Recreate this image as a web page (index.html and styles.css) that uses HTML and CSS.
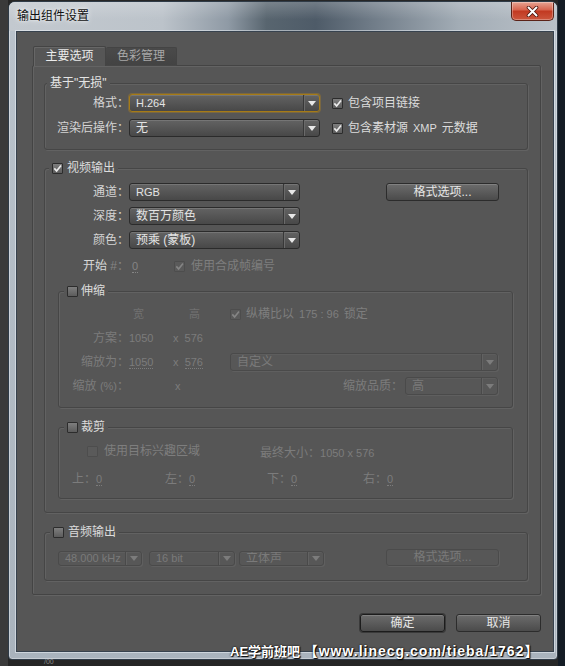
FILE: index.html
```html
<!DOCTYPE html>
<html lang="zh-CN">
<head>
<meta charset="utf-8">
<title>输出组件设置</title>
<link rel="stylesheet" href="styles.css">
</head>
<body>
<div class="desk">
  <div class="window">
    <div class="titlebar">
      <span class="title">输出组件设置</span>
      <div class="close">
        <svg width="13" height="11" viewBox="0 0 13 11"><path d="M2.5 1.5 L10.5 9.5 M10.5 1.5 L2.5 9.5" stroke="#4a140c" stroke-width="3.6" stroke-linecap="round"/><path d="M2.5 1.5 L10.5 9.5 M10.5 1.5 L2.5 9.5" stroke="#ffffff" stroke-width="2" stroke-linecap="round"/></svg>
      </div>
    </div>
    <div class="client">
      <div class="tabs">
        <div class="tab active">主要选项</div>
        <div class="tab">色彩管理</div>
      </div>
      <div class="panel">
        <div class="group g-base">
          <div class="legend">基于"无损"</div>
          <div class="grid-base">
            <div class="lbl">格式：</div>
            <div class="sel focus"><span class="v lat">H.264</span><span class="a"></span></div>
            <div class="chk"><span class="cb"><svg viewBox="0 0 9 9" width="9" height="9"><path d="M1.3 4.4 3.6 6.9 8 1.4" fill="none" stroke="currentColor" stroke-width="1.6"/></svg></span>包含项目链接</div>
            <div class="lbl">渲染后操作：</div>
            <div class="sel"><span class="v">无</span><span class="a"></span></div>
            <div class="chk"><span class="cb"><svg viewBox="0 0 9 9" width="9" height="9"><path d="M1.3 4.4 3.6 6.9 8 1.4" fill="none" stroke="currentColor" stroke-width="1.6"/></svg></span>包含素材源 <span class="lat xmp">XMP</span> 元数据</div>
          </div>
        </div>

        <div class="group g-video">
          <div class="legend chk"><span class="cb"><svg viewBox="0 0 9 9" width="9" height="9"><path d="M1.3 4.4 3.6 6.9 8 1.4" fill="none" stroke="currentColor" stroke-width="1.6"/></svg></span>视频输出</div>
          <div class="grid-video">
            <div class="lbl">通道：</div>
            <div class="sel"><span class="v lat">RGB</span><span class="a"></span></div>
            <div class="btn fmt">格式选项...</div>
            <div class="lbl">深度：</div>
            <div class="sel"><span class="v">数百万颜色</span><span class="a"></span></div>
            <div></div>
            <div class="lbl">颜色：</div>
            <div class="sel"><span class="v">预乘 (蒙板)</span><span class="a"></span></div>
            <div></div>
          </div>
          <div class="start-row">
            <div class="lbl"><span class="hi">开始</span> <span class="dim">#：</span></div>
            <div class="num"><span class="ul lat">0</span></div>
            <div class="chk dis"><span class="cb"><svg viewBox="0 0 9 9" width="9" height="9"><path d="M1.3 4.4 3.6 6.9 8 1.4" fill="none" stroke="currentColor" stroke-width="1.6"/></svg></span>使用合成帧编号</div>
          </div>

          <div class="group g-stretch">
            <div class="legend chk"><span class="cb"></span>伸缩</div>
            <div class="grid-stretch dis">
              <div></div>
              <div class="hdr w">宽</div>
              <div class="hdr h">高</div>
              <div class="chk dis"><span class="cb"><svg viewBox="0 0 9 9" width="9" height="9"><path d="M1.3 4.4 3.6 6.9 8 1.4" fill="none" stroke="currentColor" stroke-width="1.6"/></svg></span>纵横比以 <span class="lat">175 : 96</span> 锁定</div>

              <div class="lbl">方案：</div>
              <div class="lat">1050</div>
              <div class="lat">x&nbsp; 576</div>
              <div></div>

              <div class="lbl">缩放为：</div>
              <div class="lat"><span class="ul">1050</span></div>
              <div class="lat">x&nbsp; <span class="ul">576</span></div>
              <div class="sel dis"><span class="v">自定义</span><span class="a"></span></div>

              <div class="lbl">缩放 <span class="lat">(%)</span>：</div>
              <div></div>
              <div class="lat xcol">x</div>
              <div class="qual">缩放品质：<div class="sel dis q"><span class="v">高</span><span class="a"></span></div></div>
            </div>
          </div>

          <div class="group g-crop">
            <div class="legend chk"><span class="cb"></span>裁剪</div>
            <div class="crop-r1 dis">
              <div class="chk dis roi"><span class="cb"></span>使用目标兴趣区域</div>
              <div>最终大小：<span class="lat">1050 x 576</span></div>
            </div>
            <div class="crop-r2 dis">
              <div class="c1">上：<span class="ul lat">0</span></div>
              <div class="c2">左：<span class="ul lat">0</span></div>
              <div class="c3">下：<span class="ul lat">0</span></div>
              <div>右：<span class="ul lat">0</span></div>
            </div>
          </div>
        </div>

        <div class="group g-audio">
          <div class="legend chk"><span class="cb"></span>音频输出</div>
          <div class="audio-row">
            <div class="sel dis sm w1"><span class="v lat">48.000 kHz</span><span class="a"></span></div>
            <div class="sel dis sm w2"><span class="v lat">16 bit</span><span class="a"></span></div>
            <div class="sel dis sm w3"><span class="v">立体声</span><span class="a"></span></div>
            <div class="btn dis afmt">格式选项...</div>
          </div>
        </div>
      </div>

      <div class="actions">
        <div class="btn act default">确定</div>
        <div class="btn act">取消</div>
      </div>
    </div>
  </div>
  <div class="wm">AE学前班吧 <span class="url">【www.linecg.com/tieba/1762】</span></div>
  <div class="under">/00</div>
</div>
</body>
</html>
```

FILE: styles.css
```css
* { box-sizing: border-box; }
html, body { margin: 0; padding: 0; }
body {
  width: 565px;
  height: 666px;
  overflow: hidden;
  background: #232323;
  font-family: "Liberation Sans", "Noto Sans CJK SC", sans-serif;
  font-size: 12px;
  color: #d6d6d6;
}
.desk {
  position: relative;
  width: 565px;
  height: 666px;
  padding-top: 1px;
  background: linear-gradient(90deg, #3a3a3a 0, #3a3a3a 8px, #262626 8px, #262626 558px, #141c25 558px);
}
.window {
  margin-left: 8px;
  width: 550px;
  height: 659px;
  border: 1px solid #2f3b47;
  border-radius: 7px 7px 4px 4px;
  background: linear-gradient(#bac3cc, #a9b3bd);
  box-shadow: inset 0 0 0 1px rgba(255,255,255,.35);
  display: flex;
  flex-direction: column;
  overflow: hidden;
}
.titlebar {
  flex: none;
  height: 29px;
  display: flex;
  align-items: flex-start;
  padding-left: 8px;
  background:
    linear-gradient(180deg, rgba(255,255,255,.2), rgba(255,255,255,0) 60%),
    linear-gradient(90deg, #c3c9cf 0%, #bcc3ca 28%, #8f9aa5 40%, #58656f 47%, #4e5b68 56%, #6f7b87 66%, #a2acb5 82%, #bac1c8 100%);
}
.title {
  line-height: 28px;
  color: #101010;
  text-shadow: 0 0 6px rgba(255,255,255,.9), 0 0 3px rgba(255,255,255,.7);
}
.close {
  margin-left: auto;
  margin-right: 3px;
  width: 43px;
  height: 19px;
  border: 1px solid #5b2217;
  border-top: none;
  border-radius: 0 0 5px 5px;
  background: linear-gradient(#e7a392 0%, #d86650 42%, #c23a22 52%, #cc563d 100%);
  box-shadow: inset 0 0 0 1px rgba(255,255,255,.3);
  display: flex;
  align-items: center;
  justify-content: center;
}
.client {
  flex: none;
  margin: 0 3px 0 7px;
  height: 621px;
  background: #565656;
  border: 1px solid #37424e;
  box-shadow: 0 0 0 1px rgba(235,240,245,.55);
  padding: 14px 12px 0 15px;
}

/* tabs */
.tabs {
  display: flex;
  height: 20px;
  margin-left: 1px;
  margin-bottom: -1px;
  position: relative;
  z-index: 1;
}
.tab {
  height: 20px;
  line-height: 18px;
  text-align: center;
  border: 1px solid #444;
  border-bottom: none;
  border-radius: 2px 2px 0 0;
}
.tab.active {
  width: 73px;
  background: #565656;
  color: #ebebeb;
  box-shadow: inset 1px 1px 0 #676767;
}
.tab:not(.active) {
  width: 71px;
  height: 19px;
  margin-top: 1px;
  line-height: 17px;
  border-left: none;
  border-bottom: 1px solid #464646;
  background: linear-gradient(#4a4a4a, #434343);
  color: #a8a8a8;
}
.panel {
  height: 530px;
  border: 1px solid #444;
  border-radius: 2px;
  box-shadow: inset 1px 1px 0 #636363, 1px 1px 0 #636363;
  padding: 17px 12px 0 11px;
}

/* groups */
.group {
  position: relative;
  border: 1px solid #464646;
  border-radius: 3px;
  box-shadow: inset 1px 1px 0 #626262, 1px 1px 0 #626262;
}
.legend {
  position: absolute;
  top: -10px;
  left: 4px;
  height: 18px;
  line-height: 18px;
  padding: 0 3px;
  background: #565656;
  color: #e4e4e4;
  white-space: nowrap;
}
.legend.chk { gap: 4px; }
.g-base { height: 67px; padding-top: 10px; }
.g-base .legend { left: 2px; }
.g-video { height: 345px; margin-top: 18px; padding-top: 14px; }
.g-stretch { height: 117px; margin: 18px 14px 0 13px; padding-top: 13px; }
.g-stretch .legend, .g-crop .legend { left: 5px; gap: 3px; }
.g-crop { height: 72px; margin: 19px 14px 0 13px; padding-top: 14px; }
.g-audio { height: 49px; margin-top: 19px; padding-top: 16px; }
.g-audio .legend { left: 5px; }

.lbl { text-align: right; white-space: nowrap; line-height: 18px; color: #d4d4d4; }
.lat { font-size: 11px; }
.xmp { font-size: 11px; }

/* checkbox */
.chk {
  display: flex;
  align-items: center;
  gap: 5px;
  white-space: nowrap;
  line-height: 18px;
  color: #dcdcdc;
}
.cb {
  flex: none;
  width: 11px;
  height: 11px;
  border: 1px solid #2c2c2c;
  border-radius: 1px;
  background: linear-gradient(#7e7e7e, #5c5c5c);
  color: #ececec;
  display: inline-flex;
  align-items: center;
  justify-content: center;
}
.cb svg { display: block; }
.chk.dis { color: #7e7e7e; }
.chk.dis .cb {
  border-color: #4d4d4d;
  background: #5a5a5a;
  color: #858585;
}

/* select */
.sel {
  display: flex;
  align-items: center;
  height: 18px;
  border: 1px solid #2b2b2b;
  border-radius: 3px;
  background: linear-gradient(#636363, #484848);
  box-shadow: inset 0 1px 0 rgba(255,255,255,.12);
  color: #e4e4e4;
  white-space: nowrap;
  overflow: hidden;
}
.sel .v { flex: 1; padding-left: 6px; line-height: 16px; }
.sel .a {
  flex: none;
  width: 16px;
  height: 100%;
  border-left: 1px solid #383838;
  box-shadow: inset 1px 0 0 #6a6a6a;
  display: flex;
  align-items: center;
  justify-content: center;
}
.sel .a::after {
  content: "";
  border-left: 4px solid transparent;
  border-right: 4px solid transparent;
  border-top: 5px solid #e8e8e8;
}
.sel.focus {
  border-color: #a67b16;
  box-shadow: inset 0 1px 0 rgba(255,255,255,.12), 0 0 0 1px rgba(185,135,30,.35);
}
.sel.dis {
  border-color: #4a4a4a;
  background: #575757;
  box-shadow: inset 0 1px 0 rgba(255,255,255,.04), 1px 1px 0 rgba(255,255,255,.06);
  color: #7a7a7a;
}
.sel.dis .a { border-left-color: #4a4a4a; box-shadow: inset 1px 0 0 #626262; }
.sel.dis .a::after { border-top-color: #7c7c7c; }

/* buttons */
.btn {
  height: 18px;
  line-height: 16px;
  text-align: center;
  border: 1px solid #2c2c2c;
  border-radius: 3px;
  background: linear-gradient(#6c6c6c, #4b4b4b);
  box-shadow: inset 0 1px 0 rgba(255,255,255,.15);
  color: #e6e6e6;
  white-space: nowrap;
}
.btn.dis {
  border-color: #4b4b4b;
  background: #575757;
  box-shadow: 1px 1px 0 rgba(255,255,255,.06);
  color: #7a7a7a;
}
.btn.default {
  border-color: #1c1c1c;
  box-shadow: inset 0 1px 0 rgba(255,255,255,.15), 0 0 0 1px #3a3a3a;
}

/* base group */
.grid-base {
  display: grid;
  grid-template-columns: 84px 191px 1fr;
  grid-auto-rows: 18px;
  row-gap: 7px;
  align-items: center;
}
.grid-base .chk { margin-left: 12px; }

/* video group */
.grid-video {
  display: grid;
  grid-template-columns: 84px 171px 1fr;
  grid-auto-rows: 18px;
  row-gap: 6px;
  align-items: center;
}
.fmt { margin-left: 86px; width: 113px; }
.start-row {
  display: grid;
  grid-template-columns: 84px 45px auto;
  height: 16px;
  margin-top: 8px;
  align-items: center;
}
.start-row .lbl { line-height: 16px; }
.hi { color: #d8d8d8; }
.dim { color: #858585; }
.num { padding-left: 3px; color: #858585; }
.ul { border-bottom: 1px dotted currentColor; line-height: 12px; display: inline-block; }
.start-row .chk { gap: 6px; }

/* stretch */
.dis { color: #7c7c7c; }
.grid-stretch {
  display: grid;
  grid-template-columns: 70px 44px 57px 268px;
  grid-auto-rows: 18px;
  row-gap: 6px;
  align-items: center;
  line-height: 18px;
  white-space: nowrap;
}
.grid-stretch .lbl { color: #7c7c7c; }
.hdr { color: #717171; font-size: 11px; }
.hdr.w { padding-left: 4px; }
.hdr.h { padding-left: 16px; }
.xcol { padding-left: 2px; }
.qual { display: flex; align-items: center; justify-content: flex-end; gap: 2px; }
.sel.q { width: 93px; }

/* crop */
.crop-r1 {
  display: flex;
  align-items: center;
  height: 18px;
  padding-left: 28px;
  white-space: nowrap;
}
.roi { width: 173px; gap: 6px; }
.crop-r2 {
  display: flex;
  align-items: center;
  height: 18px;
  margin-top: 8px;
  padding-left: 13px;
  white-space: nowrap;
}
.c1 { width: 93px; }
.c2 { width: 102px; }
.c3 { width: 96px; }

/* audio */
.audio-row {
  display: flex;
  align-items: flex-end;
  height: 17px;
  padding-left: 13px;
}
.sel.sm { height: 15px; }
.sel.sm .v { line-height: 13px; }
.w1 { width: 84px; }
.w2 { width: 86px; margin-left: 7px; }
.w3 { width: 85px; margin-left: 4px; }
.afmt { width: 113px; height: 17px; line-height: 15px; margin-left: 62px; }

/* dialog buttons */
.actions {
  display: flex;
  justify-content: flex-end;
  gap: 11px;
  margin-top: 19px;
}
.act { width: 85px; }

/* watermark over screenshot */
.wm {
  position: absolute;
  left: 230px;
  top: 640px;
  font-size: 13px;
  font-weight: 700;
  color: #ffffff;
  white-space: nowrap;
  text-shadow: 0 0 2px #000, 1px 1px 1px #000;
}
.url { font-size: 14px; letter-spacing: 1px; }
.under {
  position: absolute;
  left: 44px;
  top: 658px;
  font-size: 7px;
  line-height: 8px;
  color: #8a8a8a;
}
```
